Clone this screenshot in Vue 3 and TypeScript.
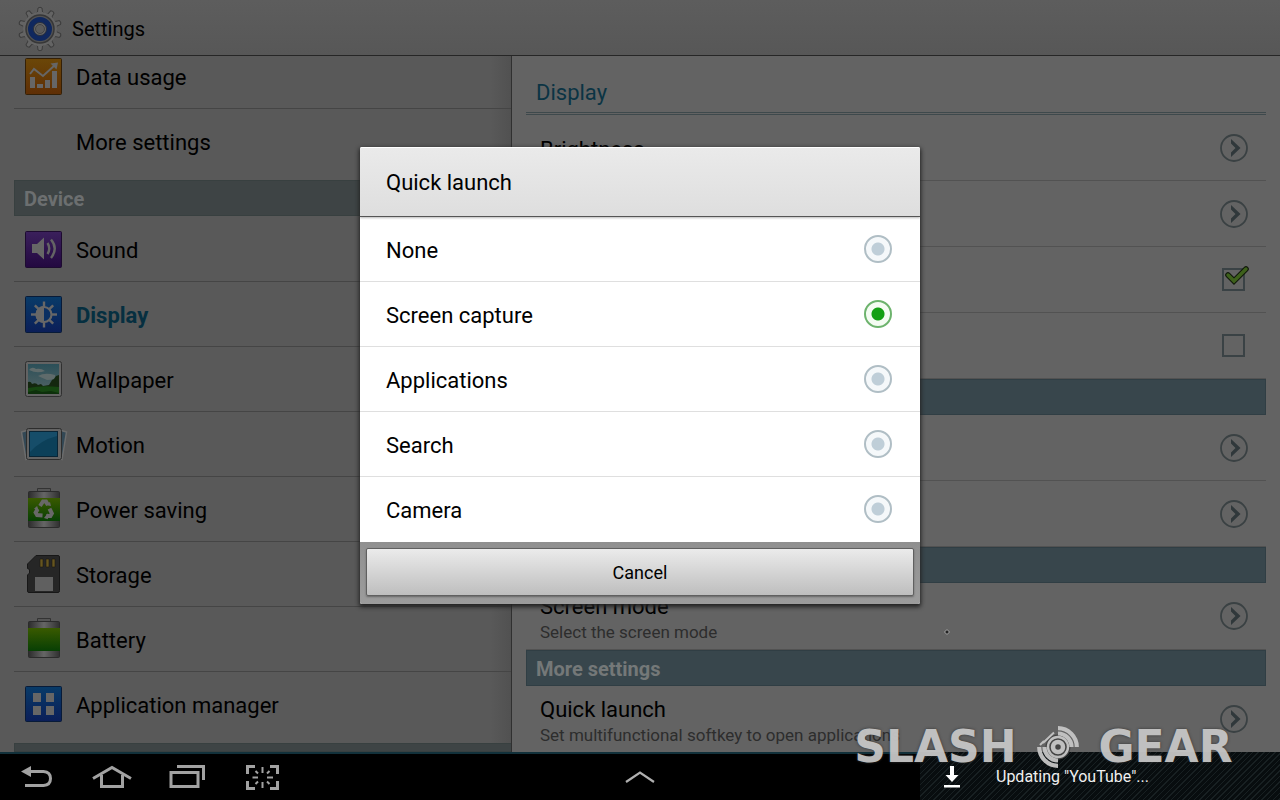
<script setup lang="ts">
import { ref } from 'vue'

interface NavItem { name: string; icon: string }

const connections: NavItem[] = [
  { name: 'Data usage', icon: 'data' },
  { name: 'More settings', icon: 'none' },
]
const device: NavItem[] = [
  { name: 'Sound', icon: 'sound' },
  { name: 'Display', icon: 'display' },
  { name: 'Wallpaper', icon: 'wallpaper' },
  { name: 'Motion', icon: 'motion' },
  { name: 'Power saving', icon: 'power' },
  { name: 'Storage', icon: 'storage' },
  { name: 'Battery', icon: 'battery' },
  { name: 'Application manager', icon: 'apps' },
]
const options: string[] = ['None', 'Screen capture', 'Applications', 'Search', 'Camera']
const selected = ref('Screen capture')
const optionOn = ref(true)
const optionOff = ref(false)

interface Row { kind: 'link' | 'on' | 'off' | 'head'; title?: string; note?: string }
const rows: Row[] = [
  { kind: 'link', title: 'Brightness' },
  { kind: 'link' },
  { kind: 'on' },
  { kind: 'off' },
  { kind: 'head' },
  { kind: 'link' },
  { kind: 'link' },
  { kind: 'head' },
  { kind: 'link', title: 'Screen mode', note: 'Select the screen mode' },
  { kind: 'head', title: 'More settings' },
  { kind: 'link', title: 'Quick launch', note: 'Set multifunctional softkey to open applications' },
]
const teeth: number[] = [0, 36, 72, 108, 144, 180, 216, 252, 288, 324]
const rays: number[] = [0, 45, 90, 135, 180, 225, 270, 315]
</script>

<template>
  <div class="screen">
    <svg class="defs" width="0" height="0" aria-hidden="true">
      <defs>
        <linearGradient id="orange" x1="0" y1="0" x2="0" y2="1"><stop offset="0" stop-color="#6b4708" /><stop offset="1" stop-color="#5f2e05" /></linearGradient>
        <linearGradient id="purple" x1="0" y1="0" x2="0" y2="1"><stop offset="0" stop-color="#3b205c" /><stop offset="1" stop-color="#230840" /></linearGradient>
        <linearGradient id="blue" x1="0" y1="0" x2="0" y2="1"><stop offset="0" stop-color="#083b68" /><stop offset="1" stop-color="#0b1e58" /></linearGradient>
        <linearGradient id="green" x1="0" y1="0" x2="0" y2="1"><stop offset="0" stop-color="#3a5a00" /><stop offset="1" stop-color="#073f04" /></linearGradient>
        <linearGradient id="metal" x1="0" y1="0" x2="1" y2="0"><stop offset="0" stop-color="#2c2c2c" /><stop offset=".5" stop-color="#666" /><stop offset="1" stop-color="#303030" /></linearGradient>
        <linearGradient id="sky" x1="0" y1="0" x2="0" y2="1"><stop offset="0" stop-color="#2b4f58" /><stop offset="1" stop-color="#566566" /></linearGradient>
      </defs>
    </svg>

    <header class="bar">
      <svg class="gear" width="48" height="48" viewBox="0 0 48 48" aria-hidden="true">
        <g fill="#646464" stroke="#3c3c3c" stroke-width="1">
          <path v-for="t in teeth" :key="t" d="M19 9L21.500 7L22 3Q24 1.500 26 3L26.500 7L29 9Z" :transform="`rotate(${t} 24 24)`" />
        </g>
        <circle cx="24" cy="24" r="17" fill="#646464" />
        <circle cx="24" cy="24" r="14" fill="#525252" stroke="#373737" stroke-width="1.500" />
        <circle cx="24" cy="24" r="9" fill="none" stroke="#10285e" stroke-width="6" />
        <circle cx="24" cy="24" r="6.500" fill="#676767" stroke="#292f3b" />
        <circle cx="24" cy="24" r="4.500" fill="#5b5b5b" stroke="#3c3c3c" stroke-width=".8" />
      </svg>
      <h1>Settings</h1>
    </header>

    <main class="body">
      <nav class="side" aria-label="Settings">
        <template v-for="(group, g) in [connections, device]" :key="g">
          <h2 v-if="g === 1" class="side-head">Device</h2>
          <ul class="side-list">
            <li v-for="item in group" :key="item.name">
              <a href="#" class="side-item" :class="{ active: item.name === 'Display' }">
                <svg class="icon" width="48" height="48" viewBox="0 0 48 48" aria-hidden="true">
                  <g v-if="item.icon === 'data'">
                    <rect x="5.500" y="6.500" width="36" height="36" rx="1" fill="url(#orange)" stroke="#352006" />
                    <path d="M10 25h5v11h-5zM17 32h6v4h-6zM25 28h5v8h-5zM32 19h5v17h-5z" fill="#666" />
                    <path d="M10 22L14 17L23 24L35 13" fill="none" stroke="#666" stroke-width="2" />
                    <path d="M30.500 11.500L38 10.500L36.500 17.500Z" fill="#666" />
                  </g>
                  <g v-else-if="item.icon === 'sound'">
                    <rect x="5.500" y="6.500" width="36" height="36" rx="1" fill="url(#purple)" stroke="#1d0b30" />
                    <path d="M12 19h5l7-6.500v22L17 28h-5z" fill="#666" />
                    <path d="M27.500 18Q31 23.500 27.500 29M31 14.500Q38.500 23.500 31 33" fill="none" stroke="#646464" stroke-width="2.400" />
                  </g>
                  <g v-else-if="item.icon === 'display'">
                    <rect x="5.500" y="6.500" width="36" height="36" rx="1" fill="url(#blue)" stroke="#081b38" />
                    <path v-for="r in rays" :key="r" d="M24 17V11.500" :transform="`rotate(${r} 24 24.500)`" stroke="#676767" stroke-width="2.400" />
                    <circle cx="24" cy="24.500" r="7.500" fill="#0a2f62" stroke="#676767" stroke-width="2.200" />
                    <path d="M24 16a8.500 8.500 0 0 0 0 17z" fill="#676767" />
                  </g>
                  <g v-else-if="item.icon === 'wallpaper'">
                    <rect x="5.500" y="6.500" width="36" height="35" rx="2" fill="#636363" stroke="#303030" />
                    <rect x="8" y="9" width="31" height="30" fill="url(#sky)" />
                    <path d="M9 15q3-4 7-1q5-1 9 2q-8 3-16-1zM18 21q7-4 17-1q2 5-8 5z" fill="#5f6b6b" />
                    <path d="M8 27q3-1 4 2q4-2 6 1l3-1l2 2l6-1l3-5l2-1l2-3l3-1v14H8z" fill="#14270f" />
                    <path d="M8 33q14-3 31-1v7H8z" fill="#164611" />
                    <path d="M8 37l8-2l6 2l9-1l8 2v1H8z" fill="#0d300b" />
                  </g>
                  <g v-else-if="item.icon === 'motion'">
                    <path d="M1.500 12L12 9V37L6 39.500ZM46.500 12L36 9V37L42 39.500Z" fill="#334855" stroke="#6c6c6c" stroke-width="1.500" />
                    <rect x="6.500" y="8.500" width="35" height="31" rx="2" fill="#636363" stroke="#2d2d2d" />
                    <rect x="9.500" y="11.500" width="28" height="25" fill="#0c4059" stroke="#092536" />
                    <path d="M10 32Q21 20 37 16V12H10Z" fill="#164d69" />
                  </g>
                  <g v-else-if="item.icon === 'power' || item.icon === 'battery'">
                    <path d="M17.500 7V3.500h13V7z" fill="#555" stroke="#333" />
                    <rect x="8.500" y="6.500" width="31" height="36" rx="1" fill="url(#metal)" stroke="#2b2b2b" />
                    <rect x="8" y="13" width="32" height="23" fill="url(#green)" />
                    <g v-if="item.icon === 'power'" fill="none" stroke="#686868" stroke-width="4">
                      <path v-for="n in 3" :key="n" d="M20 21L23 16.500H26L28 20" :transform="`rotate(${(n - 1) * 120} 24 25)`" />
                      <path v-for="n in 3" :key="'t' + n" d="M25 20L31 21L30 17Z" :transform="`rotate(${(n - 1) * 120} 24 25)`" fill="#686868" stroke="none" />
                    </g>
                  </g>
                  <g v-else-if="item.icon === 'storage'">
                    <path d="M16 5.500H38Q39.500 5.500 39.500 7V40.500Q39.500 42.500 38 42.500H9Q7.500 42.500 7.500 41V25L9.500 23V19.500L7.500 18.500V14Z" fill="#262626" stroke="#171717" />
                    <path d="M20 9h3v8h-3zM26 9h3v8h-3zM32 9h3v8h-3z" fill="#66551f" stroke="#1d1a10" stroke-width=".6" />
                    <rect x="15" y="27" width="18" height="14" fill="#606060" />
                  </g>
                  <g v-else-if="item.icon === 'apps'">
                    <rect x="5.500" y="6.500" width="36" height="35" rx="1" fill="url(#blue)" stroke="#081b38" />
                    <path d="M13 13h8v9h-8zM26 13h8v9h-8zM13 26h8v9h-8zM26 26h8v9h-8z" fill="#666" />
                  </g>
                </svg>
                <span>{{ item.name }}</span>
              </a>
            </li>
          </ul>
        </template>
        <div class="side-head"></div>
      </nav>

      <section class="detail">
        <h2 class="detail-title">Display</h2>
        <template v-for="(row, i) in rows" :key="i">
          <h3 v-if="row.kind === 'head'" class="band">{{ row.title }}</h3>
          <div v-else class="row" :class="{ tall: row.note }">
            <div class="row-text">
              <div class="row-title">{{ row.title }}</div>
              <div v-if="row.note" class="row-note">{{ row.note }}</div>
            </div>
            <button v-if="row.kind === 'link'" type="button" class="go" :aria-label="row.title || 'Open'">
              <svg width="28" height="28" viewBox="0 0 28 28"><circle cx="14" cy="14" r="13" fill="none" stroke="#3a4143" stroke-width="1.800" /><path d="M11 5L20.500 14L11 23V18.500L15.500 14L11 9.500Z" fill="#30383b" /></svg>
            </button>
            <label v-else class="tick">
              <input v-if="row.kind === 'on'" v-model="optionOn" type="checkbox" aria-label="On" />
              <input v-else v-model="optionOff" type="checkbox" aria-label="Off" />
              <svg v-if="row.kind === 'on' && optionOn" width="26" height="20" viewBox="0 0 26 20" aria-hidden="true"><path d="M4 9L10 15L22 3" fill="none" stroke="#10180a" stroke-width="5.600" stroke-linecap="round" /><path d="M4 9L10 15L22 3" fill="none" stroke="#3e611b" stroke-width="3.400" stroke-linecap="round" /></svg>
            </label>
          </div>
        </template>
      </section>
    </main>

    <footer class="system">
      <div class="keys">
        <button type="button" aria-label="Back"><svg width="40" height="32" viewBox="0 0 40 32"><path d="M11 8.500H26.500Q33.500 9 33.500 15.500T26.500 22.500H8" fill="none" stroke="#a2a2a2" stroke-width="3" /><path d="M4 8.500L14 3V14Z" fill="#a2a2a2" /></svg></button>
        <button type="button" aria-label="Home"><svg width="40" height="32" viewBox="0 0 40 32"><path d="M1 15.500L20 4.500L39 15.500M9.500 12V23.500H30.500V12" fill="none" stroke="#a2a2a2" stroke-width="3" /></svg></button>
        <button type="button" aria-label="Recent apps"><svg width="40" height="32" viewBox="0 0 40 32"><path d="M4 9.500H31V23.500H4ZM10 3.500H36.500V17" fill="none" stroke="#a2a2a2" stroke-width="3" /></svg></button>
        <button type="button" aria-label="Screen capture"><svg width="40" height="32" viewBox="0 0 40 32"><path d="M13 3.500H5.500V11M28 3.500H35.500V11M5.500 18V25.500H13M35.500 18V25.500H28" fill="none" stroke="#a2a2a2" stroke-width="3" /><path d="M20.500 4V10M20.500 19V25M10.500 14.500H16M25 14.500H31M13.500 8L16 10.500M27.500 8L25 10.500M13.500 21L16 18.500M27.500 21L25 18.500" fill="none" stroke="#a2a2a2" stroke-width="2" /></svg></button>
      </div>
      <button type="button" class="up" aria-label="Show tray"><svg width="32" height="16" viewBox="0 0 32 16"><path d="M2 13L16 3.500L30 13" fill="none" stroke="#b0b0b0" stroke-width="2.200" /></svg></button>
      <div class="notice" role="status">
        <svg width="16" height="22" viewBox="0 0 16 22" aria-hidden="true"><path d="M6 0H10V9H14.500L8 16L1.500 9H6ZM0 19H16V21.500H0Z" fill="#fff" /></svg>
        <span>Updating "YouTube"...</span>
      </div>
    </footer>

    <div class="overlay">
      <form class="dialog" role="dialog" aria-labelledby="dialog-title" @submit.prevent>
        <h2 id="dialog-title">Quick launch</h2>
        <label v-for="option in options" :key="option" class="option">
          <span>{{ option }}</span>
          <input v-model="selected" type="radio" name="launch" :value="option" />
        </label>
        <div class="actions"><button type="button">Cancel</button></div>
      </form>
    </div>

    <svg class="cursor" width="6" height="6" viewBox="0 0 6 6" aria-hidden="true"><path d="M3 .5L5.500 3L3 5.500L.5 3Z" fill="#222" stroke="#aaa" /></svg>

    <div class="brand">
      <span>SLASH</span>
      <svg width="44" height="44" viewBox="0 0 44 44" aria-hidden="true">
        <circle cx="22" cy="22" r="12.500" fill="#444" />
        <g fill="none" stroke="#c6c6c6">
          <path d="M22 3.200A18.800 18.800 0 0 1 40.800 22M22 8.500A13.500 13.500 0 0 1 35.500 22M22 40.800A18.800 18.800 0 0 1 3.200 22M22 35.500A13.500 13.500 0 0 1 8.500 22" stroke-width="4.200" />
          <circle cx="22" cy="22" r="10" stroke-width="2.400" /><circle cx="22" cy="22" r="5" stroke-width="4.500" />
          <path d="M7 18L18 7.500M4 20L8 16" stroke-width="2" />
        </g>
        <circle cx="22" cy="22" r="1.500" fill="#444" />
      </svg>
      <span>GEAR</span>
    </div>
  </div>
</template>

<style>
body { margin: 0; background: #000; }
</style>

<style scoped>
* { box-sizing: border-box; }
.screen {
  position: relative;
  display: grid;
  grid-template-rows: 56px minmax(0, 1fr) 48px;
  height: 100vh;
  overflow: hidden;
  font-family: Roboto, "Liberation Sans", sans-serif;
  color: #000;
  background: #595959;
}
.defs { position: absolute; }
h1, h2, h3 { margin: 0; font-weight: 400; }
button { padding: 0; border: 0; background: none; font: inherit; color: inherit; }
svg { display: block; flex: none; }

.bar {
  display: flex;
  align-items: center;
  gap: 8px;
  padding: 3px 16px 0;
  background: linear-gradient(#5d5d5d, #575757);
  border-bottom: 1px solid #262626;
}
.bar h1 { font-size: 20px; line-height: 24px; }

.body { display: grid; grid-template-columns: 2fr 3fr; min-height: 0; overflow: hidden; }
.side {
  display: flex;
  flex-direction: column;
  justify-content: flex-end;
  min-height: 0;
  padding-left: 14px;
  overflow: hidden;
  background: linear-gradient(90deg, #595959 96%, #515151);
  border-right: 1px solid #303030;
}
.side > * { flex: none; }
.side-list { margin: 0 0 7px; padding: 0; list-style: none; }
.side-list li { border-bottom: 1px solid #454545; }
.side-list li:last-child { border-bottom: 0; }
.side-item {
  display: flex;
  align-items: center;
  gap: 8px;
  height: 64px;
  padding-left: 6px;
  font-size: 22px;
  line-height: 28px;
  color: #000;
  text-decoration: none;
}
.side-item span { padding-top: 4px; }
.side-item.active { color: #062f40; font-weight: 700; }
.side-head {
  height: 36px;
  padding: 0 9px;
  font-size: 20px;
  font-weight: 700;
  line-height: 36px;
  color: #6c6f70;
  background: #3e4445;
  border: 1px solid #384040;
  border-right: 0;
  margin-bottom: 1px;
}
.side-head:last-child { height: 9px; margin: 0; }

.detail { padding: 0 14px; background: #636363; overflow: hidden; }
.detail-title {
  height: 59px;
  padding: 23px 10px 0;
  font-size: 22px;
  line-height: 28px;
  color: #0b3444;
  border-bottom: 3px double #3e494c;
}
.row {
  display: flex;
  align-items: center;
  justify-content: space-between;
  height: 66px;
  padding: 0 18px 0 14px;
  border-bottom: 1px solid #525252;
}
.row.tall { height: 67px; }
.row-text { padding-top: 4px; }
.row-title { font-size: 22px; line-height: 28px; }
.row-note { font-size: 17px; line-height: 22px; color: #2d2d2d; }
.band {
  height: 36px;
  padding: 1px 9px 0;
  font-size: 20px;
  font-weight: 700;
  line-height: 35px;
  color: #747878;
  background: #38464c;
  border: 1px solid #303e44;
}
.tick { position: relative; display: block; width: 24px; height: 24px; margin-right: 2px; }
.tick input { appearance: none; display: block; width: 23px; height: 23px; margin: 0; border: 2px solid #3a4245; }
.tick svg { position: absolute; left: 2px; bottom: 6px; }

.system { display: grid; grid-template-columns: 1fr auto 1fr; background: #000; border-top: 2px solid #12313b; }
.keys { display: flex; align-items: center; }
.keys button { width: 75px; padding-left: 17px; padding-top: 4px; }
.up { align-self: center; width: 32px; }
.notice {
  justify-self: end;
  display: flex;
  align-items: center;
  gap: 36px;
  width: 360px;
  max-width: 100%;
  margin-top: -2px;
  padding: 2px 24px 0;
  font-size: 16px;
  line-height: 20px;
  color: #f0f0f0;
  background: repeating-linear-gradient(135deg, #080d0f 0 3px, #182022 3px 4px);
}

.overlay { position: absolute; inset: 0 0 49px; display: flex; align-items: center; justify-content: center; }
.dialog {
  width: 560px;
  max-width: 90%;
  background: #fff;
  border-radius: 2px;
  box-shadow: 0 2px 4px 1px #222;
  overflow: hidden;
}
.dialog h2 {
  height: 70px;
  padding: 21px 26px;
  font-size: 22px;
  line-height: 28px;
  background: linear-gradient(#eaeaea, #dedede);
  border-top: 1px solid #fff;
  border-bottom: 1px solid #555;
  box-shadow: 0 1px 2px #bbb;
}
.option {
  display: flex;
  align-items: center;
  justify-content: space-between;
  height: 65px;
  padding: 0 28px 0 26px;
  font-size: 22px;
  line-height: 28px;
  border-bottom: 1px solid #dfdfdf;
}
.option:nth-last-child(2) { border-bottom-color: #fff; }
.option span { padding-top: 4px; }
.option input {
  appearance: none;
  width: 28px;
  height: 28px;
  margin: 0;
  border: 2px solid #b0bec5;
  border-radius: 50%;
  background: radial-gradient(circle, #bfced8 0 6px, #f5f8fa 7px);
}
.option input:checked { border-color: #6db36d; background: radial-gradient(circle, #14a014 0 6px, #f4fcf2 7px); }
.actions { padding: 6px 6px 8px; background: linear-gradient(#909090, #9c9c9c); }
.actions button {
  display: block;
  width: 100%;
  height: 48px;
  padding-top: 2px;
  font-size: 18px;
  line-height: 24px;
  background: linear-gradient(#ebebeb, #bebebe);
  border: 1px solid #606060;
  border-radius: 2px;
  box-shadow: 0 1px 2px #666;
}
.cursor { position: absolute; left: 944px; top: 629px; }
.brand {
  position: absolute;
  right: 36px;
  bottom: 31px;
  display: grid;
  grid-template-columns: 187px 44px 157px;
  align-items: center;
  justify-items: center;
  gap: 7px;
  font-family: "DejaVu Sans", sans-serif;
  font-size: 44px;
  font-weight: 700;
  line-height: 44px;
  color: #c6c6c6;
  opacity: .95;
  text-shadow: 0 0 3px #333;
  pointer-events: none;
}
</style>
